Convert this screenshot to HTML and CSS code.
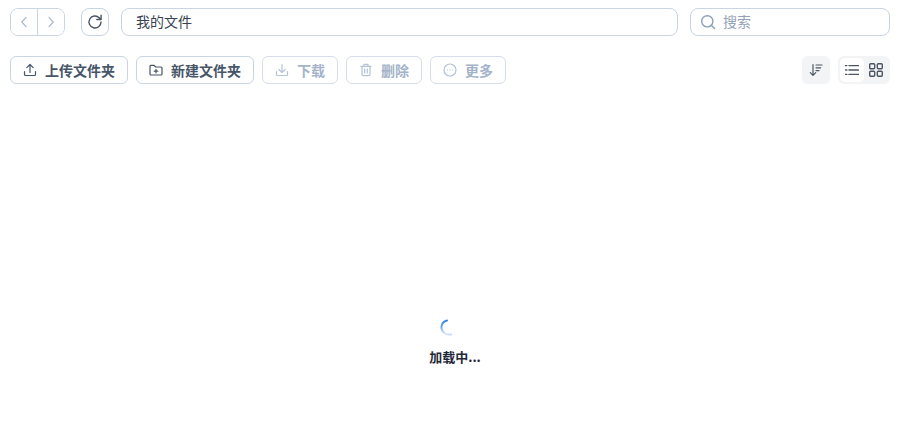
FILE: index.html
```html
<!DOCTYPE html>
<html lang="zh-CN">
<head>
<meta charset="utf-8">
<title>我的文件</title>
<link rel="stylesheet" href="styles.css">
</head>
<body>
<div class="app">
  <div class="topbar">
    <div class="navgroup">
      <button class="navbtn"><svg width="14" height="14" viewBox="0 0 14 14"><path d="M9 2.4 4.8 7 9 11.6" class="ln pale"/></svg></button>
      <button class="navbtn next"><svg width="14" height="14" viewBox="0 0 14 14"><path d="M5 2.4 9.2 7 5 11.6" class="ln pale"/></svg></button>
    </div>
    <button class="refresh"><svg width="16" height="16" viewBox="0 0 16 16"><path d="M14 8a6 6 0 1 1-1.8-4.3L14 5.4M14.1 1.2v4.3H9.8" class="ln dark thick"/></svg></button>
    <div class="path">我的文件</div>
    <div class="search">
      <svg width="16" height="16" viewBox="0 0 16 16"><circle cx="7.3" cy="7.3" r="5.6" class="ln thick"/><path d="m11.5 11.5 3 3" class="ln thick"/></svg>
      <span>搜索</span>
    </div>
  </div>
  <div class="toolbar">
    <button class="btn"><svg width="14" height="14" viewBox="0 0 14 14"><path d="M1.5 8.5v3a1 1 0 0 0 1 1h9a1 1 0 0 0 1-1v-3M7 9.5V1.6M3.8 4.6 7 1.5l3.2 3.1" class="ln mid"/></svg><span>上传文件夹</span></button>
    <button class="btn"><svg width="14" height="14" viewBox="0 0 14 14"><path d="M1 3.4a1 1 0 0 1 1-1h3.2l1.4 1.6H12a1 1 0 0 1 1 1v6a1 1 0 0 1-1 1H2a1 1 0 0 1-1-1zM7 6.4v3.6M5.2 8.2h3.6" class="ln mid"/></svg><span>新建文件夹</span></button>
    <button class="btn off"><svg width="14" height="14" viewBox="0 0 14 14"><path d="M1.5 8.5v3a1 1 0 0 0 1 1h9a1 1 0 0 0 1-1v-3M7 1.6v7.8M3.8 6.4 7 9.5l3.2-3.1" class="ln"/></svg><span>下载</span></button>
    <button class="btn off"><svg width="14" height="14" viewBox="0 0 14 14"><path d="M2 3.4h10M5 3.2V1.4h4v1.8M3 3.4v8.2a1 1 0 0 0 1 1h6a1 1 0 0 0 1-1V3.4M5.7 6v4M8.3 6v4" class="ln"/></svg><span>删除</span></button>
    <button class="btn off"><svg width="14" height="14" viewBox="0 0 14 14"><circle cx="7" cy="7" r="6" class="ln"/><path d="M4.4 7h.1M7 7h.1M9.6 7h.1" class="ln"/></svg><span>更多</span></button>
    <div class="tools-right">
      <button class="sort"><svg width="14" height="14" viewBox="0 0 14 14"><path d="M4 1.5v10.5M1.3 9.6 4 12.3l2.7-2.7M7 2h6M7 4.8h4.6M7 7.6H10" class="ln dark"/></svg></button>
      <div class="views">
        <button class="view active"><svg width="14" height="14" viewBox="0 0 14 14"><path d="M4 2.6h9.5M4 7h9.5M4 11.4h9.5M.5 2.6h1.4M.5 7h1.4M.5 11.4h1.4" class="ln dark thick"/></svg></button>
        <button class="view"><svg width="14" height="14" viewBox="0 0 14 14"><rect x=".7" y=".7" width="5" height="5" rx="1" class="ln dark thick"/><rect x="8.3" y=".7" width="5" height="5" rx="1" class="ln dark thick"/><rect x=".7" y="8.3" width="5" height="5" rx="1" class="ln dark thick"/><rect x="8.3" y="8.3" width="5" height="5" rx="1" class="ln dark thick"/></svg></button>
      </div>
    </div>
  </div>
  <div class="loading">
    <svg class="spinner" width="20" height="20" viewBox="0 0 20 20"><defs><linearGradient id="sg" x1="0.8" y1="0" x2="0.6" y2="1"><stop offset="0" stop-color="#2f7fe0"/><stop offset=".6" stop-color="#6aa8ee"/><stop offset="1" stop-color="#d8e8fb"/></linearGradient></defs><path d="M9 2.5A7.5 7.5 0 0 0 3.4 9 7.6 7.6 0 0 0 7 15.5q3 1.7 6 1" fill="none" stroke="url(#sg)" stroke-width="2" stroke-linecap="round"/></svg>
    <div class="loadtext">加载中...</div>
  </div>
</div>
</body>
</html>
```
FILE: styles.css
```css
* { box-sizing: border-box; }
html, body { margin: 0; height: 100%; background: #fff; }
body { font-family: "Noto Sans CJK SC", "Noto Sans", sans-serif; overflow: hidden; }
button { font-family: inherit; padding: 0; background: #fff; cursor: pointer; }
.app { width: 901px; height: 437px; padding: 8px 11px 0 10px; display: flex; flex-direction: column; }
.ln { fill: none; stroke: #8f9fb5; stroke-width: 1.2; stroke-linecap: round; stroke-linejoin: round; }
.ln.pale { stroke: #a9b8cb; }
.ln.mid { stroke: #475569; }
.ln.dark { stroke: #4b5563; }
.ln.thick { stroke-width: 1.4; }
.topbar { display: flex; align-items: center; height: 28px; }
.navgroup { display: flex; width: 55px; height: 28px; border: 1px solid #c9d5e3; border-radius: 8px; overflow: hidden; }
.navbtn { flex: 1; border: 0; display: flex; align-items: center; justify-content: center; }
.navbtn.next { border-left: 1px solid #c9d5e3; }
.refresh { width: 28px; height: 28px; margin-left: 16px; border: 1px solid #c9d5e3; border-radius: 8px; display: flex; align-items: center; justify-content: center; }
.path { width: 557px; height: 28px; margin-left: 12px; padding-left: 14px; border: 1px solid #c9d5e3; border-radius: 8px; font-size: 14px; line-height: 25px; color: #374151; }
.search { flex: 1; height: 28px; margin-left: 12px; padding-left: 9px; border: 1px solid #c9d5e3; border-radius: 8px; display: flex; align-items: center; gap: 7px; font-size: 14px; line-height: 25px; color: #94a3b8; }
.search span { margin-top: -1px; }
.toolbar { display: flex; align-items: center; gap: 8px; height: 28px; margin-top: 20px; }
.btn { height: 28px; padding: 0 12px; border: 1px solid #c9d5e3; border-radius: 6px; display: flex; align-items: center; gap: 8px; font-size: 14px; font-weight: 700; color: #475569; }
.btn span { margin-top: -1px; }
.btn.off { color: #a3b3c9; border-color: #d5deea; }
.btn.off .ln { stroke: #b4c2d4; }
.tools-right { margin-left: auto; display: flex; gap: 8px; }
.sort { width: 28px; height: 28px; border: 0; border-radius: 6px; background: #f3f4f6; display: flex; align-items: center; justify-content: center; }
.views { width: 52px; height: 28px; padding: 2px; border-radius: 6px; background: #f3f4f6; display: flex; }
.view { width: 24px; height: 24px; border: 0; border-radius: 5px; background: transparent; display: flex; align-items: center; justify-content: center; }
.view.active { background: #fff; }
.loading { flex: 1; display: flex; flex-direction: column; align-items: center; padding: 234px 0 0 10px; }
.spinner { display: block; margin-right: 14px; }
.loadtext { margin-top: 9px; font-size: 13px; font-weight: 700; line-height: 19px; color: #1f2937; }
```
